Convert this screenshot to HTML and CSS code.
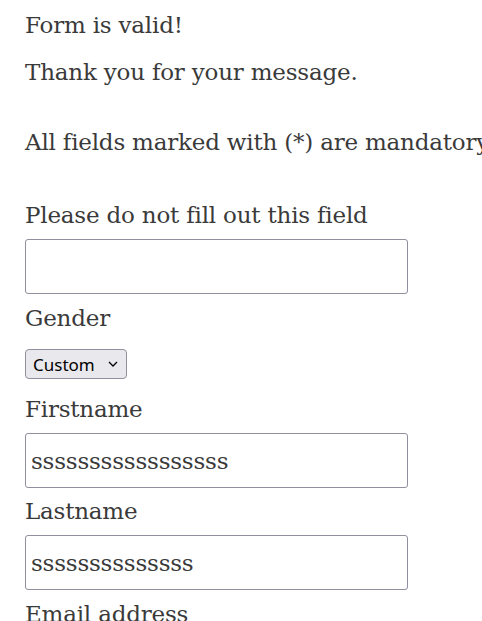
FILE: index.html
```html
<!DOCTYPE html>
<html>
<head>
<meta charset="utf-8">
<link rel="stylesheet" href="styles.css">
</head>
<body>
<div class="page">
  <p class="msg msg-first">Form is valid!</p>
  <p class="msg msg-second">Thank you for your message.</p>
  <p class="msg msg-note">All fields marked with (*) are mandatory</p>
  <form class="form">
    <label class="label label-first" for="hp">Please do not fill out this field</label>
    <input class="field" id="hp" type="text">
    <label class="label" for="gender">Gender</label>
    <span class="select-wrap">
      <select class="select" id="gender">
        <option>Custom</option>
      </select>
      <svg class="chevron" width="10" height="6" viewBox="0 0 10 6"><path d="M1 1 L5 5 L9 1" fill="none" stroke="#000" stroke-width="1.3"/></svg>
    </span>
    <label class="label label-after-select" for="first">Firstname</label>
    <input class="field" id="first" type="text" value="sssssssssssssssss">
    <label class="label label-tight" for="last">Lastname</label>
    <input class="field" id="last" type="text" value="ssssssssssssss">
    <label class="label" for="email">Email address</label>
  </form>
</div>
</body>
</html>
```

FILE: styles.css
```css
html, body {
  margin: 0;
  padding: 0;
  background: #ffffff;
}
body {
  overflow: hidden;
}
.page {
  padding: 7px 0 0 25px;
  font-family: "DejaVu Serif", serif;
  font-size: 23px;
  letter-spacing: -0.2px;
  line-height: 36px;
  color: #3a3a3a;
  white-space: nowrap;
}
.msg {
  margin: 0;
}
.msg-second {
  margin-top: 11px;
}
.msg-note {
  margin-top: 34px;
}
.form {
  display: flex;
  flex-direction: column;
  align-items: flex-start;
}
.label {
  display: block;
  margin-top: 6px;
}
.label-first {
  margin-top: 37px;
}
.label-after-select {
  margin-top: 12px;
}
.label-tight {
  margin-top: 5px;
}
.field {
  box-sizing: border-box;
  width: 383px;
  height: 55px;
  margin: 6px 0 0 0;
  padding: 0 5px;
  border: 1px solid #8f8f9d;
  border-radius: 3px;
  font-family: "DejaVu Serif", serif;
  font-size: 23px;
  letter-spacing: -0.2px;
  color: #3a3a3a;
  background: #fff;
}
.select-wrap {
  position: relative;
  display: block;
  margin-top: 13px;
  height: 30px;
}
.select {
  display: block;
  box-sizing: border-box;
  -webkit-appearance: none;
  appearance: none;
  width: 102px;
  height: 30px;
  margin: 0;
  padding: 0 24px 0 7px;
  border: 1px solid #8f8f9d;
  border-radius: 4px;
  background: #e9e9ed;
  font-family: "Noto Sans", sans-serif;
  font-size: 17px;
  letter-spacing: 0;
  color: #000;
}
.chevron {
  position: absolute;
  left: 83px;
  top: 12px;
  pointer-events: none;
}
```
